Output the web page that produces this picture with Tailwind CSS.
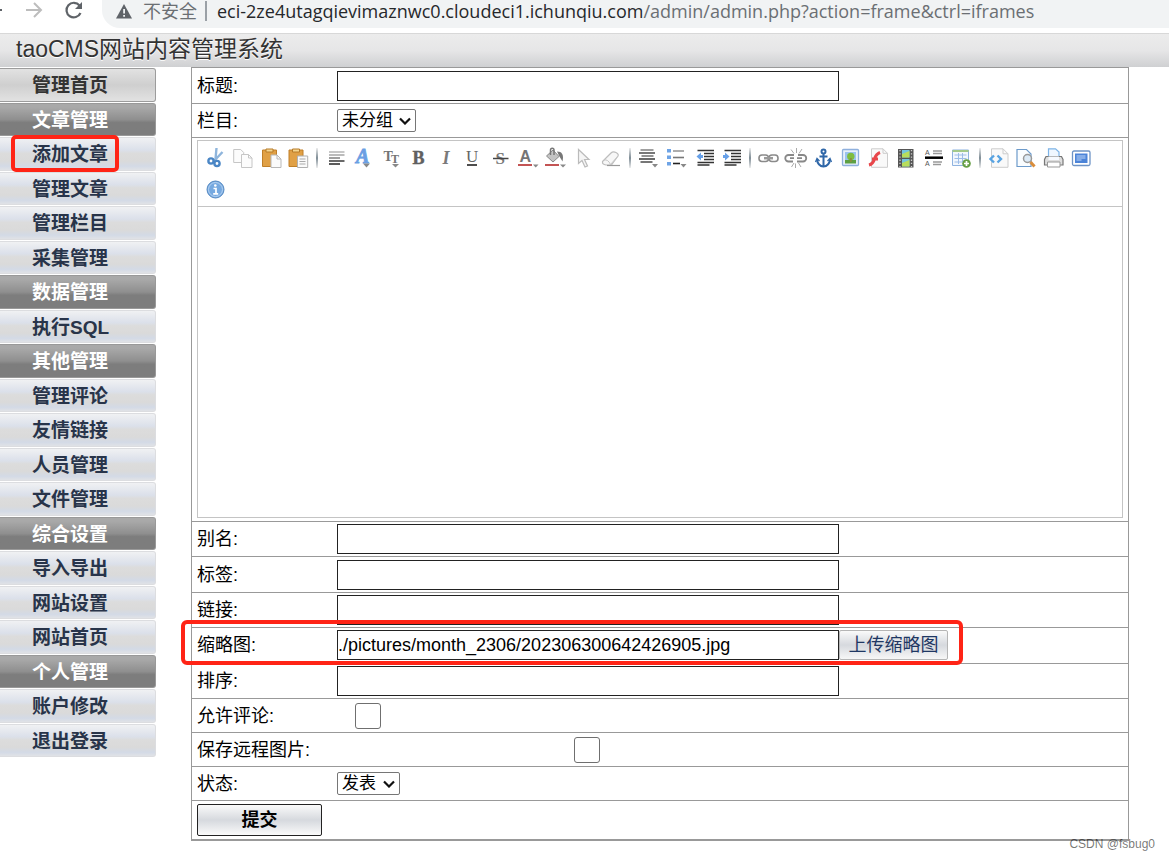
<!DOCTYPE html>
<html lang="zh-CN">
<head>
<meta charset="utf-8">
<meta name="viewport" content="width=device-width, initial-scale=1">
<title>taoCMS网站内容管理系统</title>
<script src="https://cdn.jsdelivr.net/npm/@tailwindcss/browser@4"></script>
</head>
<body class="min-h-screen bg-white text-black font-['Liberation_Sans','Noto_Sans_CJK_SC',sans-serif] text-[18px] leading-6">

<!-- Browser bar -->
<div class="flex h-[33px] items-start bg-white font-['Open_Sans','Noto_Sans_CJK_SC',sans-serif] text-[18px] leading-[22px]">
  <div class="flex w-[102px] shrink-0 items-center">
    <svg class="h-[22px] w-[102px]" viewBox="0 0 102 22" fill="none" aria-hidden="true">
      <path d="M0 10h2" stroke="#5f6368" stroke-width="2"/>
      <path d="M26 10h14M34 3l7 7-7 7" stroke="#bdbdbd" stroke-width="2"/>
      <path d="M79.500 5.500A7.300 7.300 0 1 0 80.500 13" stroke="#5f6368" stroke-width="2.200"/>
      <path d="M82 2v7h-7z" fill="#5f6368"/>
    </svg>
  </div>
  <div class="flex h-7 min-w-0 flex-1 items-start whitespace-nowrap rounded-bl-[18px] bg-[#f1f3f4] pl-[13px]">
    <svg class="mt-1 h-[15px] w-[18px] shrink-0" viewBox="0 0 18 15" aria-hidden="true">
      <path d="M9 0l8 14.500H1z" fill="#5f6368"/><path d="M8.200 5h1.800v4.500H8.200zM8.200 11h1.800v1.800H8.200z" fill="#f1f3f4"/>
    </svg>
    <span class="ml-2.5 w-[54px] text-[#6b6f73]">不安全</span>
    <span class="ml-2 mt-px h-5 w-[2px] bg-[#9aa0a6]"></span>
    <span class="ml-2.5 text-[#26282b]">eci-2ze4utagqievimaznwc0.cloudeci1.ichunqiu.com<span class="text-[#6b6f73]">/admin/admin.php?action=frame&amp;ctrl=iframes</span></span>
  </div>
</div>

<header class="h-[34px] border-t border-[#d8d8d8] bg-linear-to-b from-[#ececec] via-[#e6e6e7] via-50% to-[#cfd0d2] pl-4">
  <h1 class="text-[23px] leading-[31px] text-[#333] [text-shadow:0_1px_0_#fff]">taoCMS网站内容管理系统</h1>
</header>

<div class="flex items-start">
  <!-- Side menu -->
  <nav class="w-[156px] shrink-0 pt-px" aria-label="管理菜单">
    <ul class="grid h-[690px] auto-rows-fr text-[19px] font-bold leading-[33px] text-[#28344a] *:pb-px [&_a]:block [&_a]:h-full [&_a]:rounded-r-[3px] [&_a]:border [&_a]:border-l-0 [&_a]:pl-8">
      <li><a href="#" class="border-[#9c9c9c] bg-linear-to-b from-[#e2e2e2] via-[#cfcfcf] via-50% to-[#e2e2e2] text-[#333]">管理首页</a></li>
      <li><a href="#" class="border-[#999] bg-linear-to-b from-[#a9a9a9] from-10% via-[#8f8f8f] via-50% to-[#7d7d7d] to-60% text-white">文章管理</a></li>
      <li class="relative"><a href="#" class="border-[#dcdde0] bg-[linear-gradient(#f0f1f3,#dbe0ea_38%,#dcdcdc_48%,#dadada_72%,#d3dae6_88%,#e0e2e6)]">添加文章</a>
        <span class="pointer-events-none absolute -top-[2px] left-[11px] h-[37px] w-[108px] rounded-[5px] border-4 border-[#ff2416]"></span></li>
      <li><a href="#" class="border-[#dcdde0] bg-[linear-gradient(#f0f1f3,#dbe0ea_38%,#dcdcdc_48%,#dadada_72%,#d3dae6_88%,#e0e2e6)]">管理文章</a></li>
      <li><a href="#" class="border-[#dcdde0] bg-[linear-gradient(#f0f1f3,#dbe0ea_38%,#dcdcdc_48%,#dadada_72%,#d3dae6_88%,#e0e2e6)]">管理栏目</a></li>
      <li><a href="#" class="border-[#dcdde0] bg-[linear-gradient(#f0f1f3,#dbe0ea_38%,#dcdcdc_48%,#dadada_72%,#d3dae6_88%,#e0e2e6)]">采集管理</a></li>
      <li><a href="#" class="border-[#999] bg-linear-to-b from-[#a9a9a9] from-10% via-[#8f8f8f] via-50% to-[#7d7d7d] to-60% text-white">数据管理</a></li>
      <li><a href="#" class="border-[#dcdde0] bg-[linear-gradient(#f0f1f3,#dbe0ea_38%,#dcdcdc_48%,#dadada_72%,#d3dae6_88%,#e0e2e6)]">执行SQL</a></li>
      <li><a href="#" class="border-[#999] bg-linear-to-b from-[#a9a9a9] from-10% via-[#8f8f8f] via-50% to-[#7d7d7d] to-60% text-white">其他管理</a></li>
      <li><a href="#" class="border-[#dcdde0] bg-[linear-gradient(#f0f1f3,#dbe0ea_38%,#dcdcdc_48%,#dadada_72%,#d3dae6_88%,#e0e2e6)]">管理评论</a></li>
      <li><a href="#" class="border-[#dcdde0] bg-[linear-gradient(#f0f1f3,#dbe0ea_38%,#dcdcdc_48%,#dadada_72%,#d3dae6_88%,#e0e2e6)]">友情链接</a></li>
      <li><a href="#" class="border-[#dcdde0] bg-[linear-gradient(#f0f1f3,#dbe0ea_38%,#dcdcdc_48%,#dadada_72%,#d3dae6_88%,#e0e2e6)]">人员管理</a></li>
      <li><a href="#" class="border-[#dcdde0] bg-[linear-gradient(#f0f1f3,#dbe0ea_38%,#dcdcdc_48%,#dadada_72%,#d3dae6_88%,#e0e2e6)]">文件管理</a></li>
      <li><a href="#" class="border-[#999] bg-linear-to-b from-[#a9a9a9] from-10% via-[#8f8f8f] via-50% to-[#7d7d7d] to-60% text-white">综合设置</a></li>
      <li><a href="#" class="border-[#dcdde0] bg-[linear-gradient(#f0f1f3,#dbe0ea_38%,#dcdcdc_48%,#dadada_72%,#d3dae6_88%,#e0e2e6)]">导入导出</a></li>
      <li><a href="#" class="border-[#dcdde0] bg-[linear-gradient(#f0f1f3,#dbe0ea_38%,#dcdcdc_48%,#dadada_72%,#d3dae6_88%,#e0e2e6)]">网站设置</a></li>
      <li><a href="#" class="border-[#dcdde0] bg-[linear-gradient(#f0f1f3,#dbe0ea_38%,#dcdcdc_48%,#dadada_72%,#d3dae6_88%,#e0e2e6)]">网站首页</a></li>
      <li><a href="#" class="border-[#999] bg-linear-to-b from-[#a9a9a9] from-10% via-[#8f8f8f] via-50% to-[#7d7d7d] to-60% text-white">个人管理</a></li>
      <li><a href="#" class="border-[#dcdde0] bg-[linear-gradient(#f0f1f3,#dbe0ea_38%,#dcdcdc_48%,#dadada_72%,#d3dae6_88%,#e0e2e6)]">账户修改</a></li>
      <li><a href="#" class="border-[#dcdde0] bg-[linear-gradient(#f0f1f3,#dbe0ea_38%,#dcdcdc_48%,#dadada_72%,#d3dae6_88%,#e0e2e6)]">退出登录</a></li>
    </ul>
  </nav>

  <main class="relative ml-[35px] mr-10 min-w-0 flex-1">
    <form class="border border-b-2 border-[#999] [&_label]:w-[140px] [&_label]:shrink-0" onsubmit="return false">
      <div class="flex h-9 items-center border-b border-[#999] pl-[5px]">
        <label for="title">标题:</label>
        <input id="title" type="text" class="h-[30px] w-[502px] border border-[#222] bg-white">
      </div>
      <div class="flex h-[34px] items-center border-b border-[#999] pl-[5px]">
        <label for="cat">栏目:</label>
        <span class="relative">
          <select id="cat" class="block h-[23px] w-[79px] appearance-none rounded-[2px] border border-[#767676] bg-white pl-1 text-[17px] leading-[20px]"><option>未分组</option></select>
          <svg class="pointer-events-none absolute right-[5px] top-2 h-[8px] w-[12px]" viewBox="0 0 12 8" fill="none" stroke="#111" stroke-width="2.200" aria-hidden="true"><path d="M1 1.500l5 5 5-5"/></svg>
        </span>
      </div>

      <div class="border-b border-[#999] px-[5px] pb-[3px] pt-[2px]">
        <div class="border border-[#c4c4c4]">
          <div class="border-b border-[#c4c4c4] pl-1 pr-[27px] pt-px [&_button]:flex [&_button]:h-8 [&_button]:max-w-7 [&_button]:flex-1 [&_button]:items-center [&_button]:justify-center [&_svg]:h-5 [&_svg]:w-5 [&_svg]:shrink-0 [&_svg]:overflow-visible" role="toolbar" aria-label="编辑器工具栏">
            <div class="flex items-center">
              <button type="button" aria-label="剪切"><svg viewBox="0 0 20 20" fill="none"><path d="M10.500 0l-1 11M16.500 4L8 13" stroke="#8fb5dc" stroke-width="2.400"/><circle cx="5" cy="13" r="2.600" stroke="#4a86c5" stroke-width="2.400"/><circle cx="11" cy="15.500" r="2.600" stroke="#4a86c5" stroke-width="2.400"/></svg></button>
              <button type="button" aria-label="复制"><svg viewBox="0 0 20 20" fill="#fcfcfc" stroke="#c6c6c6"><path d="M.7 1.500h7l3 3v10H.7z"/><path d="M8.500 6.500h7l3.500 3.500v9.500H8.500z"/><path d="M15.500 6.500V10H19" fill="none"/></svg></button>
              <button type="button" aria-label="粘贴"><svg viewBox="0 0 20 20"><path d="M1.500 2h14v16.500h-14z" fill="#e0a045" stroke="#c07f28"/><path d="M5 1h7v3H5z" fill="#f5d58f" stroke="#b57a28"/><path d="M10 7h6l4 4v8.500H10z" fill="#fbfbfb" stroke="#b8b8b8"/><path d="M16 7v4h4" fill="none" stroke="#b8b8b8"/></svg></button>
              <button type="button" aria-label="粘贴为无格式文本"><svg viewBox="0 0 20 20"><path d="M1 2h14v16.500H1z" fill="#e0a045" stroke="#c07f28"/><path d="M4.500 1h7v3h-7z" fill="#f5d58f" stroke="#b57a28"/><path d="M9.500 8h10.200v11.500H9.500z" fill="#fafafa" stroke="#b0b0b0"/><path d="M11.500 11h6M11.500 13.500h6M11.500 16h6" stroke="#aaa"/></svg></button>
              <span class="mx-1 h-5 w-[2px] shrink-0 bg-linear-to-b from-[#eee] via-[#7f8d96] to-[#eee]"></span>
              <button type="button" aria-label="段落"><svg viewBox="0 0 20 20" stroke-width="1.600"><path d="M3 4h15.500" stroke="#bbb"/><path d="M3 7h15.500" stroke="#aaa"/><path d="M3 10h11" stroke="#888"/><path d="M3 13h15.500" stroke="#444"/><path d="M3 16h11" stroke="#333"/></svg></button>
              <button type="button" aria-label="字体"><svg viewBox="0 0 20 20"><text x="3" y="14.500" font-family="Liberation Serif" font-size="20" font-weight="bold" font-style="italic" fill="#6b9fe3" stroke="#6b9fe3" stroke-width=".9">A</text><path d="M10 15.500h7l-3.500 4z" fill="#888"/></svg></button>
              <button type="button" aria-label="文字大小"><svg viewBox="0 0 20 20" font-family="Liberation Serif" font-weight="bold" fill="#757575"><text x="2.500" y="12.500" font-size="14">T</text><text x="10" y="15" font-size="12">T</text><path d="M11 16h7l-3.500 3.500z" fill="#888"/></svg></button>
              <button type="button" aria-label="粗体"><svg viewBox="0 0 20 20"><text x="4.500" y="16" font-family="Liberation Serif" font-size="18" font-weight="bold" fill="#606060" stroke="#606060" stroke-width=".4">B</text></svg></button>
              <button type="button" aria-label="斜体"><svg viewBox="0 0 20 20"><text x="6.500" y="16" font-family="Liberation Serif" font-size="18" font-weight="bold" font-style="italic" fill="#7a7a7a">I</text></svg></button>
              <button type="button" aria-label="下划线"><svg viewBox="0 0 20 20"><text x="3" y="14" font-family="Liberation Serif" font-size="17" fill="#666">U</text><path d="M4 17h10" stroke="#222" stroke-width="1.600"/></svg></button>
              <button type="button" aria-label="删除线"><svg viewBox="0 0 20 20"><text x="4.500" y="16" font-family="Liberation Serif" font-size="17" font-weight="bold" fill="#777">S</text><path d="M2 10.500h15.500" stroke="#444" stroke-width="1.500"/></svg></button>
              <button type="button" aria-label="文字颜色"><svg viewBox="0 0 20 20"><text x="1.500" y="13.500" font-family="Liberation Sans" font-size="16" font-weight="bold" fill="#757575">A</text><path d="M0 17h14" stroke="#b52a2a" stroke-width="1.600"/><path d="M15 16.500h5.500L17.700 19.500z" fill="#888"/></svg></button>
              <button type="button" aria-label="文字背景"><svg viewBox="0 0 20 20"><path d="M.5 8L7 2l6 6.500-6 5.500z" fill="#c4c4c4" stroke="#888"/><path d="M4.500 7V2C4.500-.5 8 -.5 8 2v5" fill="none" stroke="#777" stroke-width="1.500"/><path d="M11 3.500c5 0 7 3 5.500 10l-3-5z" fill="#777"/><path d="M-1 17h14" stroke="#b52a2a" stroke-width="1.600"/><path d="M14 16.500h6L17 19.500z" fill="#888"/></svg></button>
              <button type="button" aria-label="选择"><svg viewBox="0 0 20 20"><path d="M5.500 1.500L16 11.500h-4.500l3 6.500-2.500 1-3-6.500L5.500 15.500z" fill="#f5f5f5" stroke="#bbb" stroke-width="1.200"/></svg></button>
              <button type="button" aria-label="清除格式"><svg viewBox="0 0 20 20"><path d="M1.500 13.500L10 5q2-2 5-.5t2 3.500L10.500 17H5q-4-.5-3.500-3.500z" fill="#f7f7f7" stroke="#bdbdbd" stroke-width="1.200"/><path d="M3 12q4-1 6.500 4.500L17 8" fill="none" stroke="#c6c6c6"/><path d="M6 17.500h13" stroke="#999" stroke-width="1.200"/></svg></button>
              <span class="mx-1 h-5 w-[2px] shrink-0 bg-linear-to-b from-[#eee] via-[#7f8d96] to-[#eee]"></span>
              <button type="button" aria-label="对齐"><svg viewBox="0 0 20 20" stroke-width="1.600"><path d="M2.500 2h13" stroke="#888"/><path d="M1 5h16" stroke="#555"/><path d="M3.500 8h12" stroke="#777"/><path d="M1 11h16" stroke="#444"/><path d="M2.500 14h12" stroke="#555"/><path d="M14 16h6l-3 3.500z" fill="#888"/></svg></button>
              <button type="button" aria-label="列表"><svg viewBox="0 0 20 20"><path d="M1 1h4v3.500H1zM1 7.500h4V11H1zM1 14h4v3.500H1z" fill="#6ea4e6"/><path d="M7 3h11" stroke="#999" stroke-width="1.600"/><path d="M7 9.500h11" stroke="#777" stroke-width="1.600"/><path d="M7 15.500h7" stroke="#222" stroke-width="1.600"/><path d="M14.500 16h6l-3 3.500z" fill="#888"/></svg></button>
              <button type="button" aria-label="减少缩进"><svg viewBox="0 0 20 20"><path d="M3.500 2.500H20M10 5.500h10M10 8.500h10M10 11.500h10M3.500 14.500H20M3.500 17h12" stroke="#333" stroke-width="1.600"/><path d="M2.500 8.500L7 4.500v2.500h2v3H7v2.500z" fill="#67a0e8"/></svg></button>
              <button type="button" aria-label="增加缩进"><svg viewBox="0 0 20 20"><path d="M3.500 2.500H20M10 5.500h10M10 8.500h10M10 11.500h10M3.500 14.500H20M3.500 17h12" stroke="#333" stroke-width="1.600"/><path d="M8.500 8.500L4 4.500v2.500H2v3h2v2.500z" fill="#67a0e8"/></svg></button>
              <span class="mx-1 h-5 w-[2px] shrink-0 bg-linear-to-b from-[#eee] via-[#7f8d96] to-[#eee]"></span>
              <button type="button" aria-label="超级链接"><svg viewBox="0 0 20 20" fill="none"><rect x="0" y="7" width="9.500" height="6.500" rx="3" stroke="#8a8a8a" stroke-width="1.600"/><rect x="10" y="7" width="9" height="6.500" rx="3" stroke="#8a8a8a" stroke-width="1.600"/><path d="M5 10.200h9" stroke="#999" stroke-width="2.500"/></svg></button>
              <button type="button" aria-label="取消链接"><svg viewBox="0 0 20 20" fill="none" stroke="#888"><path d="M8 7H2.500a3.200 3.200 0 0 0 0 6.500H7M12 7h5a3.200 3.200 0 0 1 0 6.500H11M4 10.200h4M11 10.200h5" stroke-width="1.800"/><path d="M10.500 0v5M5 1.500l3 4M16 1l-3 4.500M9.500 15.500V20M5.500 19l2.500-4M15 19l-2.500-4" stroke="#aaa"/></svg></button>
              <button type="button" aria-label="锚点"><svg viewBox="0 0 20 20" fill="none" stroke="#2f67a8" stroke-width="2"><circle cx="9.500" cy="3.500" r="2"/><path d="M9.500 5.500V18M5.500 8.500h8M3 12q1 6 6.500 6.500 5.500-.5 6.500-6.500"/><path d="M1.500 14l1.500-3.500L5.500 13M17.500 14L16 10.500 13.500 13" stroke-width="1.300"/></svg></button>
              <button type="button" aria-label="图片"><svg viewBox="0 0 20 20"><rect x="1.500" y="1.500" width="16" height="16" rx="1" fill="#e8f0fb" stroke="#8fb0dd" stroke-width="1.300"/><path d="M4 4h11v8H4z" fill="#9cc3ef"/><path d="M4 12h11v3.500H4z" fill="#5da043"/><circle cx="9.800" cy="8.500" r="3.700" fill="#7fbd3f"/><path d="M9.800 10v4" stroke="#8b8d3f" stroke-width="2"/></svg></button>
              <button type="button" aria-label="Flash"><svg viewBox="0 0 20 20"><path d="M2.500.8H14l4.500 4.500v14h-16z" fill="#f9f9f9" stroke="#ccc"/><path d="M14 .8v4.500h4.500" fill="none" stroke="#ccc"/><path d="M0 17q4-1 5.500-6T11 4.500M3 11h6" fill="none" stroke="#e8474b" stroke-width="3"/></svg></button>
              <button type="button" aria-label="视音频"><svg viewBox="0 0 20 20"><path d="M2 1h15.500v18.500H2z" fill="#555"/><path d="M6 2h7.500v7.500H6zM6 11h7.500v7.500H6z" fill="#72c5e0"/><path d="M6 6l7.500-3v6.500H6zM6 15l7.500-3v6.500H6z" fill="#b8dd5c"/><path d="M4 2v17M15.500 2v17" stroke="#ccc" stroke-width="1.300" stroke-dasharray="1.300 1.900"/></svg></button>
              <button type="button" aria-label="分页符"><svg viewBox="0 0 20 20"><path d="M1 9.700h18" stroke="#000" stroke-width="2.500"/><path d="M9 3h9M9 5.500h9M9 14h9M9 16.500h8" stroke="#999" stroke-width="1.300"/><text x="1" y="6.500" font-family="Liberation Sans" font-size="7" fill="#555">A</text><text x="1" y="18" font-family="Liberation Sans" font-size="7" fill="#555">A</text></svg></button>
              <button type="button" aria-label="表格"><svg viewBox="0 0 20 20"><path d="M1.500 2h16v15.500h-16z" fill="#f2f7fd" stroke="#8fb3e0"/><path d="M1.500 2h16v2h-16z" fill="#a3c98a"/><path d="M3.500 7h12M3.500 10.500h12M3.500 14h8M7.500 5v11M11.500 5v9" stroke="#9dbde8"/><circle cx="15.500" cy="15.500" r="4.300" fill="#669f45"/><path d="M15.500 13v5M13 15.500h5" stroke="#fff" stroke-width="1.700"/></svg></button>
              <span class="mx-1 h-5 w-[2px] shrink-0 bg-linear-to-b from-[#eee] via-[#7f8d96] to-[#eee]"></span>
              <button type="button" aria-label="HTML代码"><svg viewBox="0 0 20 20" fill="none"><path d="M2.500.8H14l5 5v13.500H2.500z" fill="#f9f9f9" stroke="#ccc"/><path d="M14 .8v5h5" stroke="#ccc"/><path d="M5 7.500L1.500 11 5 14.500M8.500 7.500L12 11l-3.500 3.500" stroke="#58a3e2" stroke-width="2.400"/></svg></button>
              <button type="button" aria-label="预览"><svg viewBox="0 0 20 20"><path d="M1 1.500h9.500L15 6v12.500H1z" fill="#fafdff" stroke="#6d9bcb" stroke-width="1.200"/><circle cx="11.500" cy="10.500" r="4" fill="#dceaf6" stroke="#999" stroke-width="1.500"/><path d="M14.500 14l4 4.500" stroke="#d98d3b" stroke-width="3"/></svg></button>
              <button type="button" aria-label="打印"><svg viewBox="0 0 20 20"><path d="M4.500 9V.8h7L15 4v5z" fill="#eff7ff" stroke="#7db3e6" stroke-width="1.200"/><path d="M2 8.500h15.500l1.500 3V17H.5v-5.500z" fill="#dedede" stroke="#777" stroke-width="1.200"/><path d="M4.500 8.500H15V12H4.500z" fill="#f6faff"/><path d="M3.500 14H16v5H3.500z" fill="#fff" stroke="#999"/></svg></button>
              <button type="button" aria-label="全屏"><svg viewBox="0 0 20 20"><rect x="1.500" y="3" width="17.500" height="14.500" rx="1.500" fill="#fff" stroke="#6e94c6" stroke-width="1.300"/><path d="M4 5.500h12.500V15H4z" fill="#4c84d8"/><path d="M5.500 8h9M5.500 10h9M5.500 12h5" stroke="#c0d8f8"/></svg></button>
            </div>
            <div class="flex items-center">
              <button type="button" aria-label="关于"><svg viewBox="0 0 20 20"><circle cx="9.500" cy="9.500" r="8.500" fill="#76a9e0" stroke="#5589c2"/><circle cx="9.500" cy="9.500" r="7" fill="none" stroke="#b5d2f2"/><circle cx="9.300" cy="5.500" r="1.300" fill="#fff"/><path d="M7.500 8.500H10v5M7.200 13.800h5" fill="none" stroke="#fff" stroke-width="1.700"/></svg></button>
            </div>
          </div>
          <textarea aria-label="内容" class="block h-[310px] w-full resize-none bg-white outline-none"></textarea>
        </div>
      </div>

      <div class="grid h-[177px] auto-rows-fr *:flex *:items-center *:border-b *:border-[#999] *:pl-[5px] [&_input]:h-[30px] [&_input]:w-[502px] [&_input]:border [&_input]:border-[#222] [&_input]:bg-white">
        <div><label for="alias">别名:</label><input id="alias" type="text"></div>
        <div><label for="tags">标签:</label><input id="tags" type="text"></div>
        <div><label for="link">链接:</label><input id="link" type="text"></div>
        <div class="relative"><label for="thumb">缩略图:</label><input id="thumb" type="text" value="./pictures/month_2306/202306300642426905.jpg">
          <button type="button" class="h-[30px] w-[109px] rounded-[2px] border border-[#b5b5b5] bg-linear-to-b from-[#fafafa] via-[#d6d9de] via-50% to-[#f7f7f7] text-[18px] leading-[27px] text-[#1f3763]">上传缩略图</button>
          <span class="pointer-events-none absolute -left-[11px] -top-2 h-[45px] w-[782px] rounded-[6px] border-4 border-[#ff2416]"></span>
        </div>
        <div><label for="order">排序:</label><input id="order" type="text"></div>
      </div>

      <div class="flex h-[34px] items-center border-b border-[#999] pl-[5px]">
        <label for="comment">允许评论:</label>
        <input id="comment" type="checkbox" class="ml-[18px] size-[26px] appearance-none rounded-[3px] border border-[#6f6f6f] bg-white">
      </div>
      <div class="flex h-[34px] items-center border-b border-[#999] pl-[5px]">
        <label for="remote">保存远程图片:</label>
        <input id="remote" type="checkbox" class="ml-[237px] size-[26px] appearance-none rounded-[3px] border border-[#6f6f6f] bg-white">
      </div>
      <div class="flex h-[34px] items-center border-b border-[#999] pl-[5px]">
        <label for="status">状态:</label>
        <span class="relative">
          <select id="status" class="block h-[23px] w-[63px] appearance-none rounded-[2px] border border-[#767676] bg-white pl-1 text-[17px] leading-[20px]"><option>发表</option></select>
          <svg class="pointer-events-none absolute right-[5px] top-2 h-[8px] w-[12px]" viewBox="0 0 12 8" fill="none" stroke="#111" stroke-width="2.200" aria-hidden="true"><path d="M1 1.500l5 5 5-5"/></svg>
        </span>
      </div>
      <div class="flex h-[38px] items-center pl-[5px]">
        <button type="submit" class="h-8 w-[125px] rounded-[2px] border border-[#222] bg-linear-to-b from-[#fafafa] via-[#d6d9de] via-50% to-[#fafafa] font-bold leading-[28px]">提交</button>
      </div>
    </form>
    <span class="absolute -bottom-[11px] -right-[26px] text-[12px] leading-4 text-black/55">CSDN @fsbug0</span>
  </main>
</div>
</body>
</html>
